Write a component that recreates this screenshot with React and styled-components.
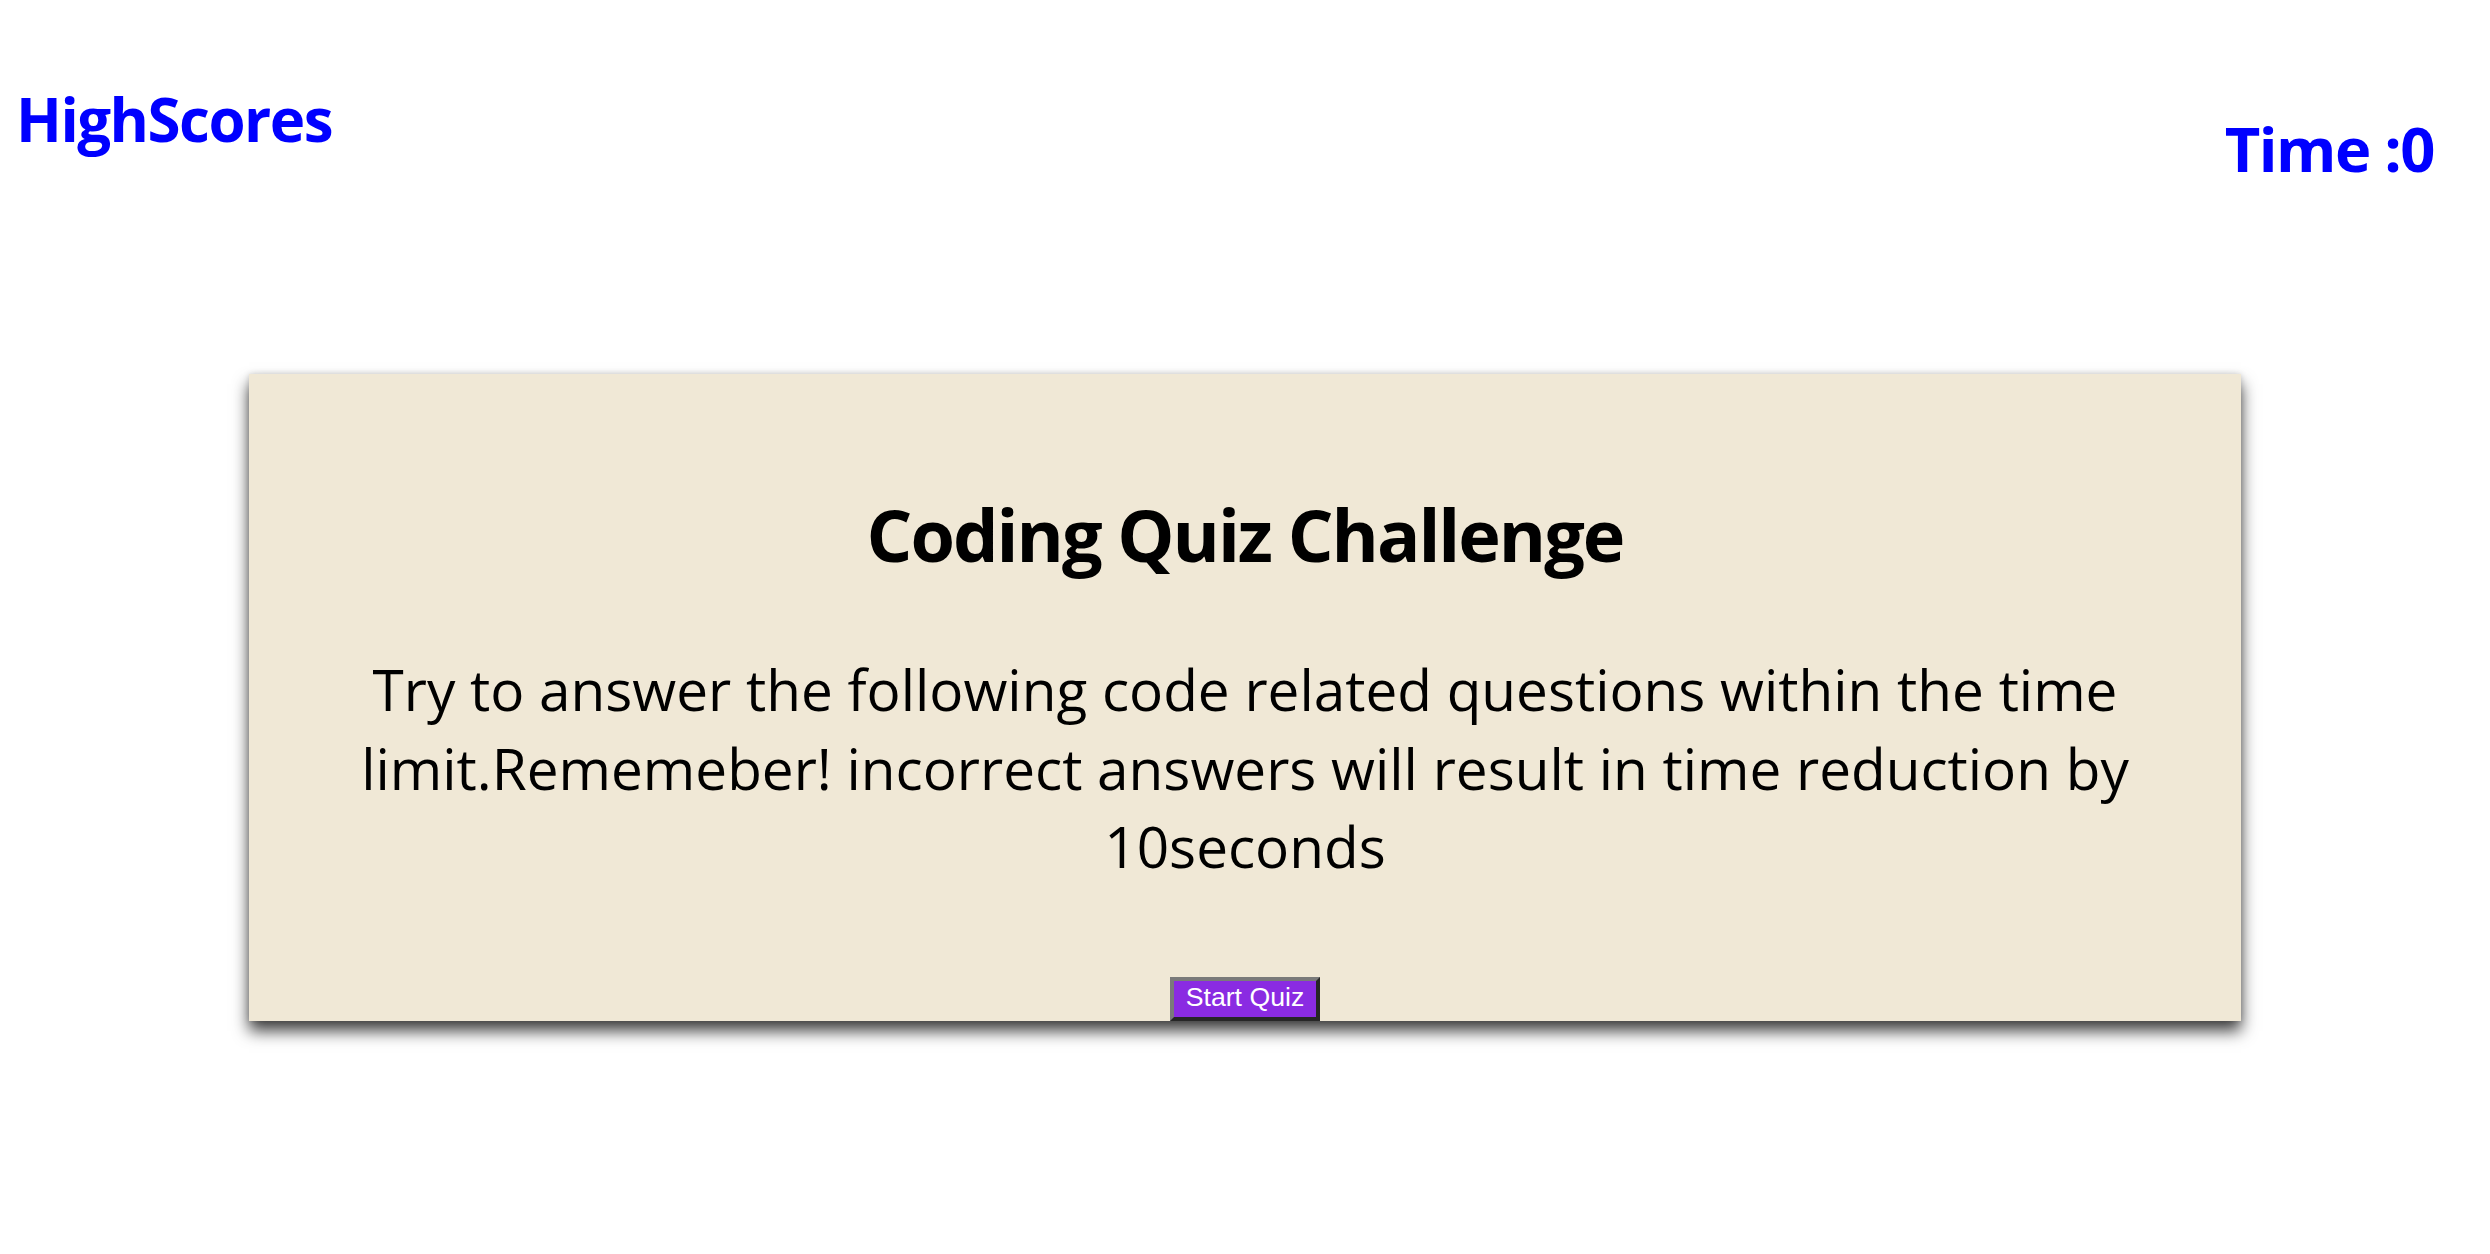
import React from 'react';
import styled, { createGlobalStyle } from 'styled-components';

const GlobalStyle = createGlobalStyle`
  html, body {
    margin: 0;
    padding: 0;
    background: #ffffff;
  }
  body {
    font-family: "Open Sans", "Noto Sans", sans-serif;
  }
`;

const Page = styled.div`
  min-height: 100vh;
  box-sizing: border-box;
  padding-bottom: 40px;
`;

const Header = styled.header`
  display: flex;
  justify-content: space-between;
  align-items: flex-start;
  padding: 83px 56px 0 16px;
  height: 103px;
`;

const NavTitle = styled.h1`
  margin: 0;
  margin-top: ${(p) => p.$offset || 0}px;
  color: #0000ff;
  font-size: ${(p) => p.$size || 60}px;
  line-height: 1.2;
  font-weight: 700;
  letter-spacing: -1.5px;
`;

const Card = styled.main`
  width: 80%;
  margin: 188px auto 0;
  padding: 116px 0 0;
  background: #f0e8d6;
  text-align: center;
  box-shadow: 0 10px 15px rgba(0, 0, 0, 0.75), 0 0 6px rgba(0, 0, 0, 0.15);
`;

const Title = styled.h2`
  margin: 0;
  font-size: 72px;
  line-height: 88px;
  font-weight: 700;
  color: #000;
  letter-spacing: -2px;
`;

const Intro = styled.p`
  margin: 72px 0 0;
  padding: 0 100px;
  font-size: 56.7px;
  line-height: 78.5px;
  font-weight: 400;
  color: #000;
`;

const Actions = styled.div`
  display: flex;
  justify-content: center;
  margin-top: 91px;
`;

const StartButton = styled.button`
  font-family: "Liberation Sans", Arial, sans-serif;
  font-size: 26.67px;
  line-height: 32px;
  color: #ffffff;
  background: #8a2be2;
  padding: 0 12px 4px;
  border: 4px solid;
  border-color: #7a7a7a #262626 #262626 #7a7a7a;
  cursor: pointer;
`;

export default function App() {
  return (
    <Page>
      <GlobalStyle />
      <Header>
        <NavTitle $size={60}>HighScores</NavTitle>
        <NavTitle $size={61.5} $offset={29}>Time :0</NavTitle>
      </Header>
      <Card>
        <Title>Coding Quiz Challenge</Title>
        <Intro>
          Try to answer the following code related questions within the time
          limit.Rememeber! incorrect answers will result in time reduction by
          10seconds
        </Intro>
        <Actions>
          <StartButton>Start Quiz</StartButton>
        </Actions>
      </Card>
    </Page>
  );
}
